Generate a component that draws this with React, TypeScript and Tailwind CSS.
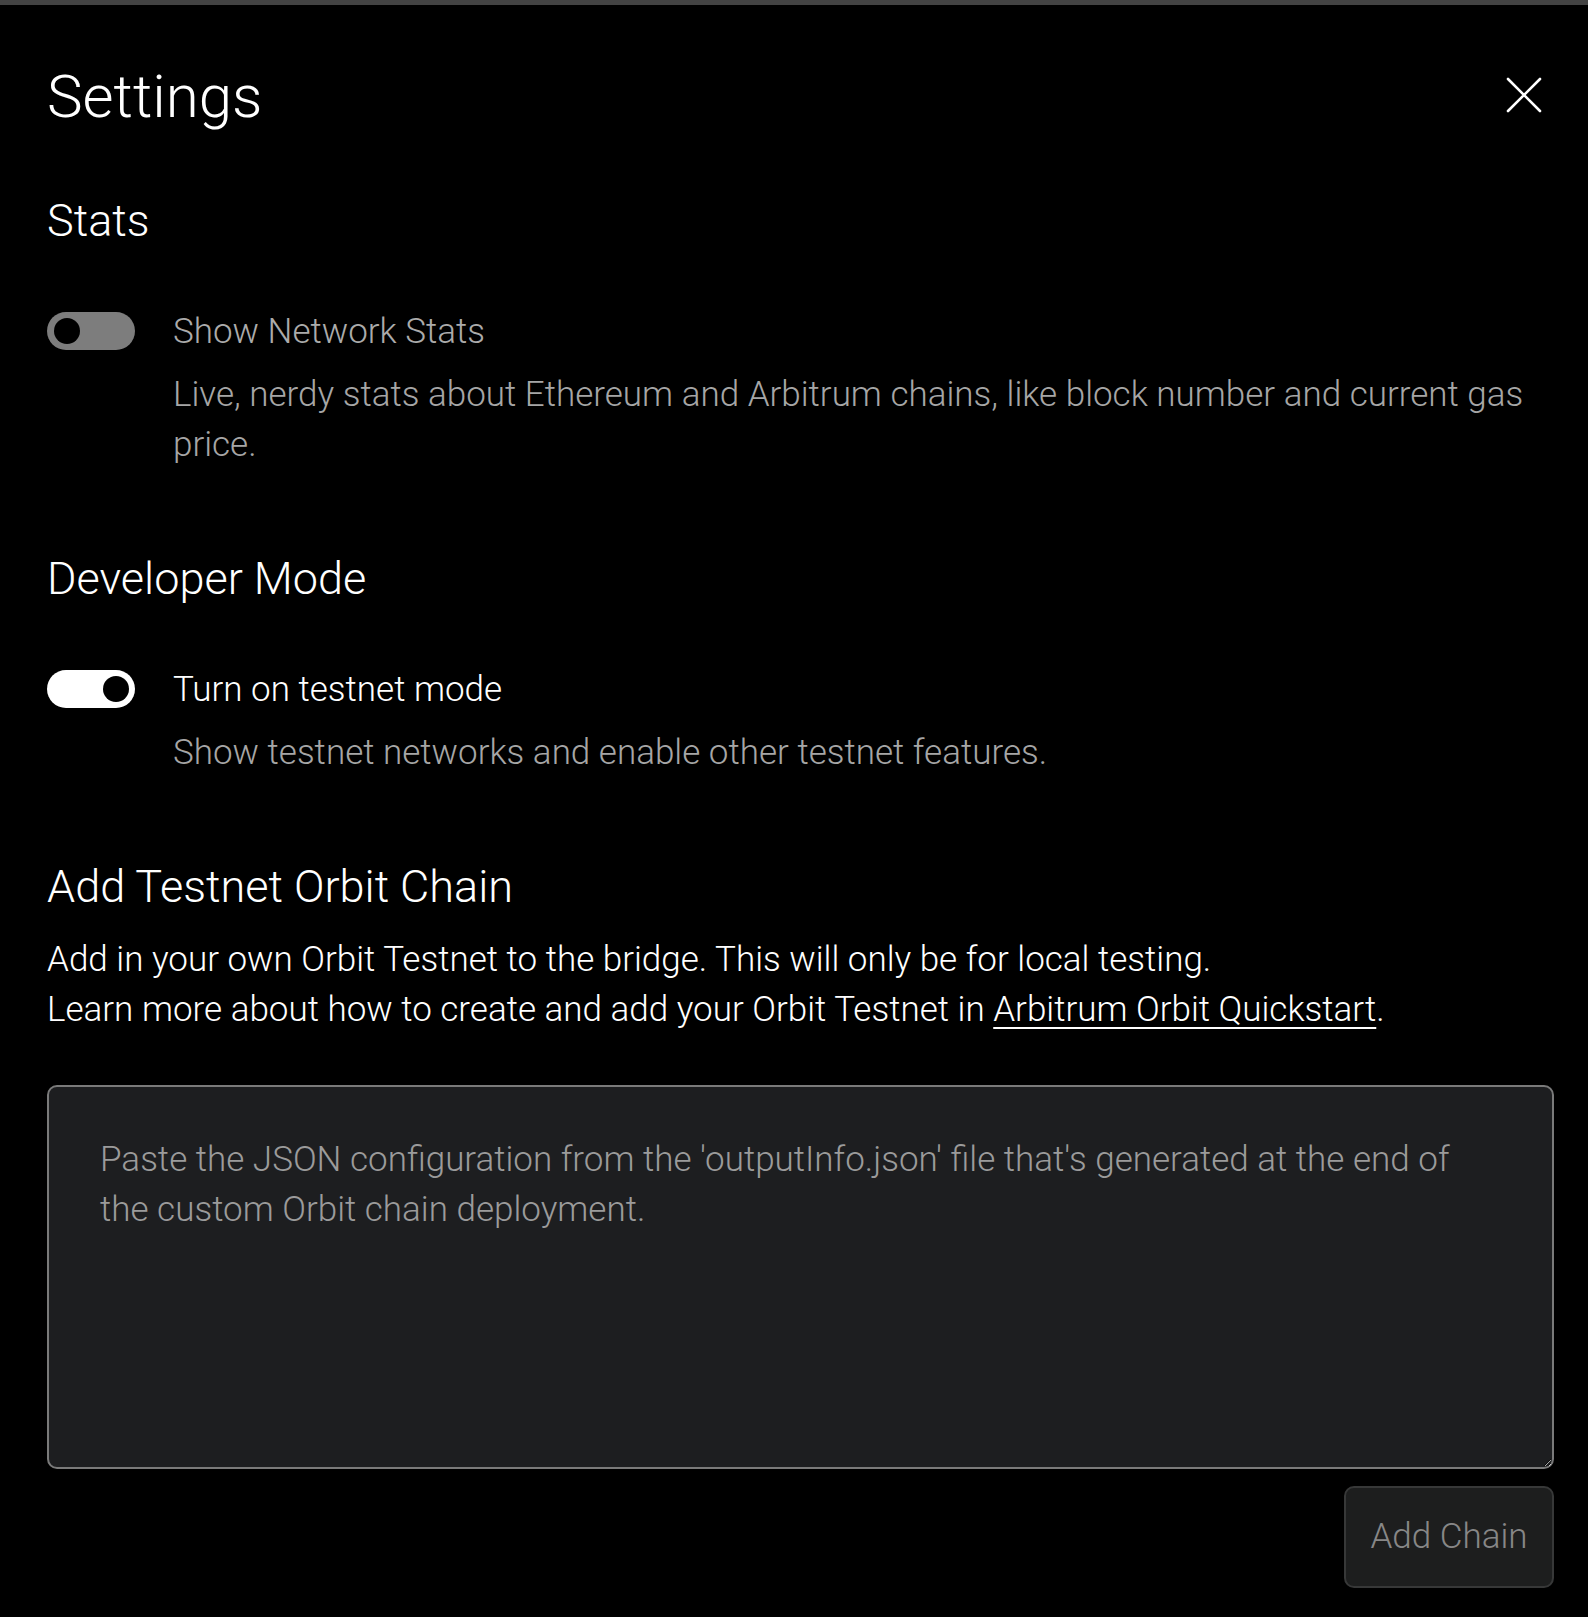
import { useState } from "react"

function Toggle({ on }: { on: boolean }) {
  return (
    <div
      className={
        on
          ? "relative mt-[5px] h-[38px] w-[88px] shrink-0 rounded-full bg-white"
          : "relative mt-[5px] h-[38px] w-[88px] shrink-0 rounded-full bg-[#7d7d7d]"
      }
    >
      <span
        className={
          on
            ? "absolute right-[6px] top-[6px] h-[26px] w-[26px] rounded-full bg-black"
            : "absolute left-[7px] top-[6px] h-[26px] w-[26px] rounded-full bg-black"
        }
      />
    </div>
  )
}

function SettingRow({
  on,
  label,
  description,
}: {
  on: boolean
  label: string
  description: string
}) {
  return (
    <div className="mt-[60px] flex items-start gap-[38px]">
      <Toggle on={on} />
      <div className="flex-1 text-[35px] leading-[50px]">
        <p className={on ? "text-white" : "text-[#ababab]"}>{label}</p>
        <p className="mt-[13px] text-[#a6a6a6]">{description}</p>
      </div>
    </div>
  )
}

export default function App() {
  const [json, setJson] = useState("")

  return (
    <div
      className="min-h-[1617px] bg-black font-light text-white"
      style={{ fontFamily: "Roboto, 'Liberation Sans', sans-serif" }}
    >
      <div className="h-[5px] bg-[#434343]" />
      <div className="pl-[47px] pr-[34px] pt-[56px] pb-[29px]">
        <div className="flex items-start justify-between">
          <h1 className="text-[60px] leading-[72px]">Settings</h1>
          <button className="mr-[12px] mt-[16px]" aria-label="Close">
            <svg width="36" height="36" viewBox="0 0 36 36" fill="none">
              <path
                d="M2 2L34 34M34 2L2 34"
                stroke="white"
                strokeWidth="2.6"
                strokeLinecap="round"
              />
            </svg>
          </button>
        </div>

        <h2 className="mt-[62px] text-[45px] leading-[52px]">Stats</h2>
        <SettingRow
          on={false}
          label="Show Network Stats"
          description="Live, nerdy stats about Ethereum and Arbitrum chains, like block number and current gas price."
        />

        <h2 className="mt-[83px] text-[45px] leading-[52px]">Developer Mode</h2>
        <SettingRow
          on={true}
          label="Turn on testnet mode"
          description="Show testnet networks and enable other testnet features."
        />

        <h2 className="mt-[83px] text-[45px] leading-[52px]">Add Testnet Orbit Chain</h2>
        <div className="mt-[22px] text-[35px] leading-[50px] text-white">
          <p>Add in your own Orbit Testnet to the bridge. This will only be for local testing.</p>
          <p>
            Learn more about how to create and add your Orbit Testnet in{" "}
            <a className="underline decoration-2 underline-offset-[6px]" href="#">
              Arbitrum Orbit Quickstart
            </a>
            .
          </p>
        </div>

        <textarea
          value={json}
          onChange={(e) => setJson(e.target.value)}
          placeholder="Paste the JSON configuration from the 'outputInfo.json' file that's generated at the end of the custom Orbit chain deployment."
          className="mt-[50px] block h-[384px] w-full rounded-[10px] border-2 border-[#7a7a7a] bg-[#1d1e20] px-[51px] pt-[48px] text-[35px] leading-[50px] font-light text-white outline-none placeholder:text-[#9b9b9b] [color-scheme:dark]"
          style={{ fontFamily: "Roboto, 'Liberation Sans', sans-serif" }}
        />

        <div className="mt-[17px] flex justify-end">
          <button
            disabled
            className="h-[102px] w-[210px] rounded-[10px] border-2 border-[#373838] bg-[#1d1e1e] text-[35px] font-light text-[#878787]"
          >
            Add Chain
          </button>
        </div>
      </div>
    </div>
  )
}
